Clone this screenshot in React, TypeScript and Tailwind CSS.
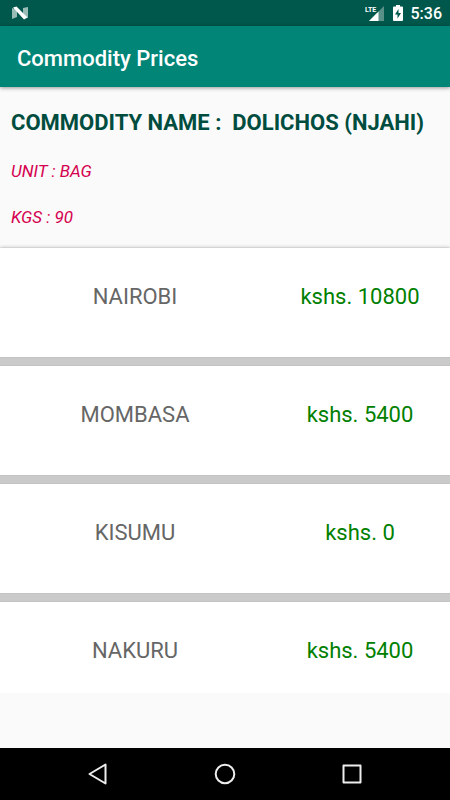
const PRICES = [
  { town: "NAIROBI", price: 10800 },
  { town: "MOMBASA", price: 5400 },
  { town: "KISUMU", price: 0 },
  { town: "NAKURU", price: 5400 },
];

function StatusBar() {
  return (
    <div className="flex h-[26px] shrink-0 items-center justify-between bg-[#00574b] pr-2 pl-3 text-white">
      <svg width="16" height="14" viewBox="0 0 16 14" aria-hidden="true">
        <path d="M0 2 5 4v7L0 13ZM16 1v11L11 10V2Z" fill="#fff" opacity=".6" />
        <path d="M1 1.500 4.500 .5 15.500 11.500 12 13.500Z" fill="#fff" />
      </svg>
      <div className="flex items-center gap-2">
        <svg width="20" height="18" viewBox="0 0 20 18" aria-hidden="true">
          <path d="M19 2v15H4Z" fill="#fff" opacity=".35" />
          <path d="M13.500 7.500V17H4Z" fill="#fff" />
          <text x="0" y="8" fontSize="7" fontWeight="700" fontFamily="Roboto, sans-serif" fill="#fff" stroke="#00574b" strokeWidth="2" paintOrder="stroke">
            LTE
          </text>
        </svg>
        <svg width="10" height="16" viewBox="0 0 10 16" aria-hidden="true">
          <path d="M3 0h4v1.500h2a1 1 0 0 1 1 1V15a1 1 0 0 1-1 1H1a1 1 0 0 1-1-1V2.500a1 1 0 0 1 1-1h2Z" fill="#fff" />
          <path d="M5.500 4 2 9.500h2.500v4L8 8H5.500Z" fill="#00574b" />
        </svg>
        <span className="pt-px text-base font-medium">5:36</span>
      </div>
    </div>
  );
}

function NavigationBar() {
  return (
    <nav className="flex h-[52px] shrink-0 items-center justify-center gap-[79px] bg-black text-[#eee]">
      <button type="button" aria-label="Back" className="flex size-12 items-center justify-center">
        <svg width="22" height="22" viewBox="0 0 22 22" fill="none" stroke="currentColor" strokeWidth="2" strokeLinejoin="round">
          <path d="M18.500 1.500v19L2.500 11Z" />
        </svg>
      </button>
      <button type="button" aria-label="Home" className="flex size-12 items-center justify-center">
        <svg width="22" height="22" viewBox="0 0 22 22" fill="none" stroke="currentColor" strokeWidth="2">
          <circle cx="11" cy="11" r="9.300" />
        </svg>
      </button>
      <button type="button" aria-label="Recent apps" className="flex size-12 items-center justify-center">
        <svg width="22" height="22" viewBox="0 0 22 22" fill="none" stroke="currentColor" strokeWidth="2" strokeLinejoin="round">
          <path d="M2.500 2.500h17v17h-17Z" />
        </svg>
      </button>
    </nav>
  );
}

export default function App() {
  return (
    <div className="flex h-screen flex-col bg-[#fafafa] font-['Roboto',sans-serif]">
      <StatusBar />
      <header className="z-10 flex h-[61px] shrink-0 items-center bg-[#008577] px-[17px] pt-1 shadow-[0_1px_4px_rgba(0,0,0,0.4)]">
        <h1 className="text-[22px] font-medium text-white">Commodity Prices</h1>
      </header>

      <section className="shrink-0 px-[11px] pt-5">
        <h2 className="text-[22px] leading-8 font-bold whitespace-pre text-[#004d40]">COMMODITY NAME :  DOLICHOS (NJAHI)</h2>
        <p className="mt-5 text-[17px] leading-6 text-[#d5004f] italic">UNIT : BAG</p>
        <p className="mt-[22px] text-[17px] leading-6 text-[#d5004f] italic">KGS : 90</p>
      </section>

      <main className="mt-[15px] mb-[55px] min-h-0 flex-1 overflow-hidden pt-1">
        <ul className="space-y-[9px] bg-[#cacaca] shadow-[0_0_4px_rgba(0,0,0,0.3)]">
          {PRICES.map((item) => (
            <li
              key={item.town}
              className="grid h-[109px] grid-cols-[3fr_2fr] bg-white pt-[33px] text-center text-[22px] leading-8 shadow-[0_0_1px_rgba(0,0,0,0.2)]"
            >
              <span className="text-[#666]">{item.town}</span>
              <span className="text-[#008000]">kshs. {item.price}</span>
            </li>
          ))}
        </ul>
      </main>

      <NavigationBar />
    </div>
  );
}
